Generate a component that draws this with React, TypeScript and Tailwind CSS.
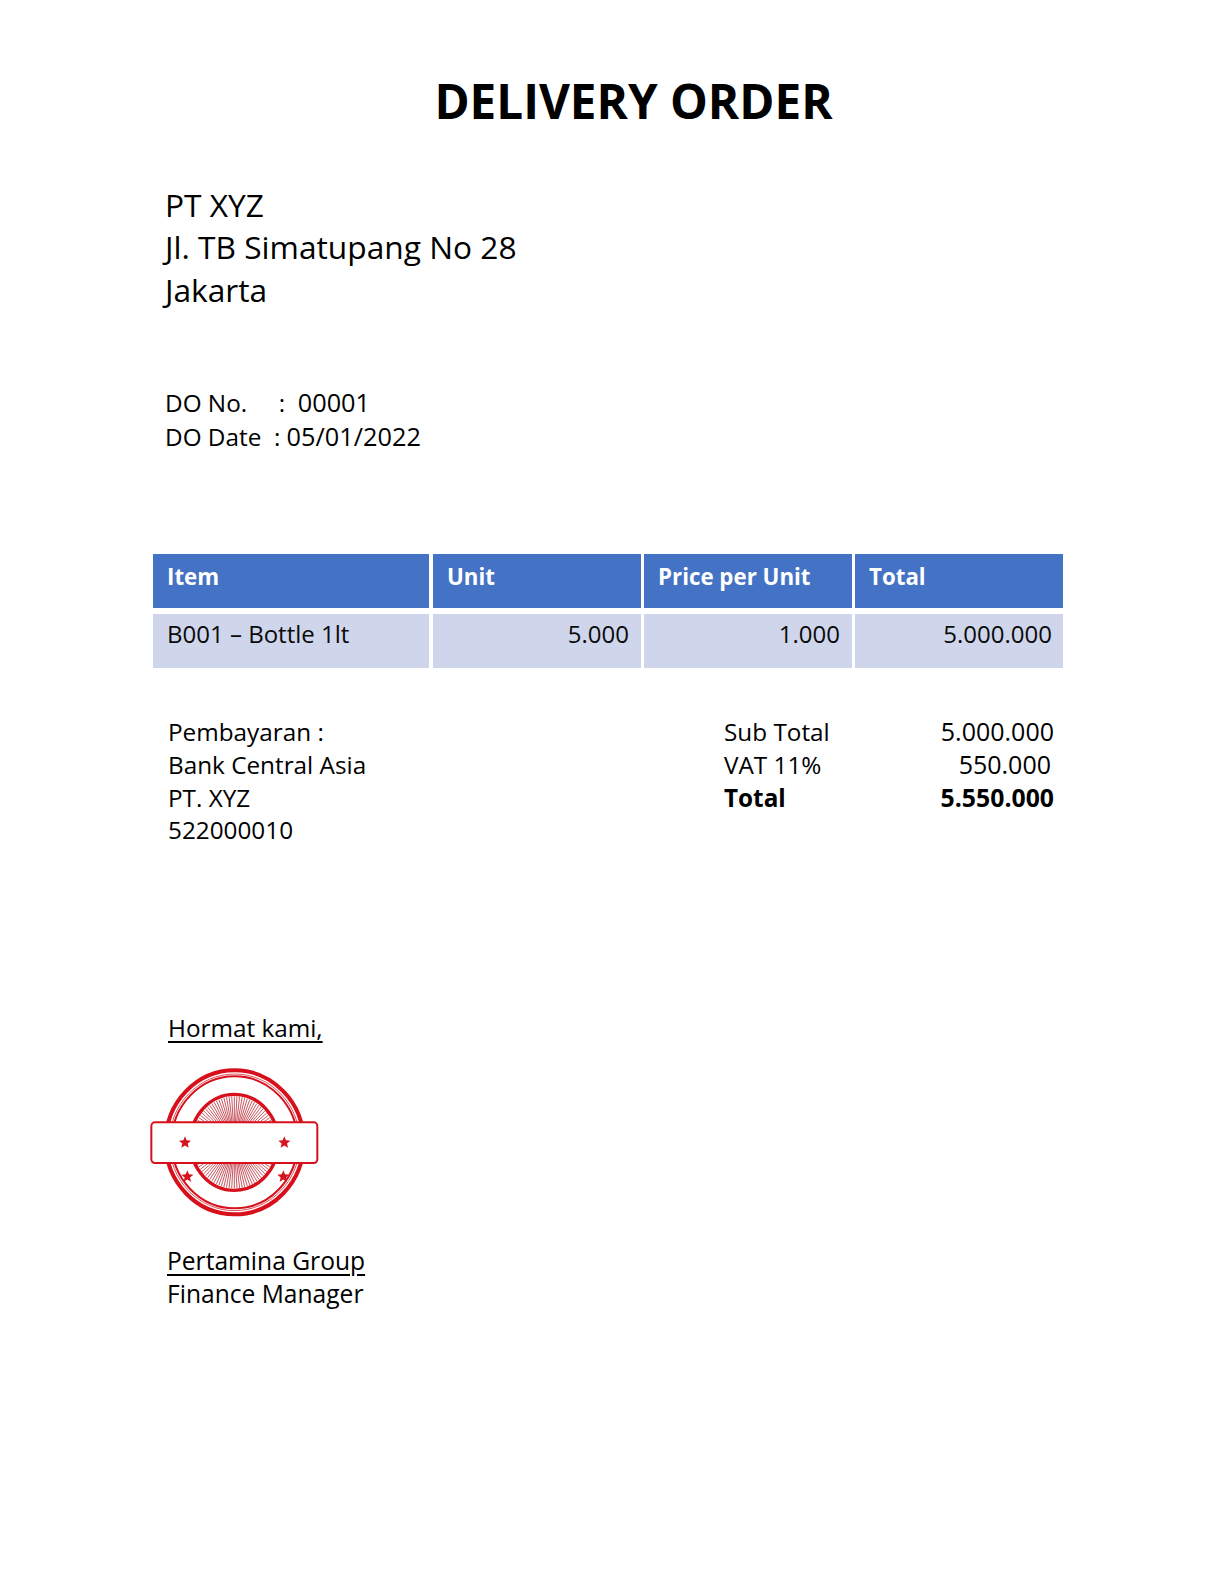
const font = { fontFamily: '"Open Sans", "Liberation Sans", sans-serif' };

function Star({ x, y }: { x: number; y: number }) {
  const pts: string[] = [];
  for (let i = 0; i < 10; i++) {
    const r = i % 2 === 0 ? 19 : 8.5;
    const a = -Math.PI / 2 + (i * Math.PI) / 5;
    pts.push(`${x + r * Math.cos(a)},${y + r * Math.sin(a)}`);
  }
  return <polygon points={pts.join(" ")} fill="#d4141f" />;
}

function Stamp() {
  const rays = [];
  for (let i = 0; i < 100; i++) {
    const a = (i * Math.PI) / 50;
    rays.push(
      <line
        key={i}
        x1={313 + 22 * Math.cos(a)}
        y1={277 + 24 * Math.sin(a)}
        x2={313 + 126 * Math.cos(a)}
        y2={277 + 138 * Math.sin(a)}
        stroke="#c24a55"
        strokeWidth="2.8"
      />
    );
  }
  return (
    <svg width="210" height="180" viewBox="0 0 630 540" className="block blur-[0.4px]">
      <ellipse cx="314" cy="277" rx="207" ry="216" fill="none" stroke="#d8101c" strokeWidth="12" />
      <ellipse cx="314" cy="277" rx="196" ry="205" fill="none" stroke="#e0505a" strokeWidth="3" />
      <ellipse cx="314" cy="277" rx="189" ry="198" fill="none" stroke="#d8101c" strokeWidth="6" />
      {rays}
      <ellipse cx="313" cy="277" rx="132" ry="144" fill="none" stroke="#d8101c" strokeWidth="10" />
      <rect x="64" y="217" width="498" height="122" rx="11" fill="#fff" stroke="#d8101c" strokeWidth="6" />
      <Star x={165} y={278} />
      <Star x={463} y={278} />
      <Star x={172} y={380} />
      <Star x={460} y={380} />
    </svg>
  );
}

const headCell = "bg-[#4472c4] text-white font-bold text-[22.3px] leading-[32px] pl-[14px] pt-[7px]";
const bodyCell = "bg-[#cfd5ea] text-[#0a0a0a] text-[24px] leading-[32px] pt-[4px] pr-[12px] text-right";

export default function App() {
  return (
    <div style={font} className="w-[1224px] h-[1584px] bg-white text-black overflow-hidden">
      <h1 className="pt-[70px] pl-[43px] text-center text-[47.6px] leading-[62px] font-bold">DELIVERY ORDER</h1>

      <div className="mt-[52px] ml-[165px] text-[31.7px] leading-[42.4px]">
        <div>PT XYZ</div>
        <div>Jl. TB Simatupang No 28</div>
        <div>Jakarta</div>
      </div>

      <div className="mt-[75px] ml-[165px] text-[24.3px] leading-[33.5px]">
        <div className="whitespace-pre">DO No.     :  <span className="text-[25.3px]">00001</span></div>
        <div className="whitespace-pre">DO Date  : <span className="text-[25.3px]">05/01/2022</span></div>
      </div>

      <div className="mt-[101px] ml-[153px] w-[910px] grid grid-cols-[276px_209px_208px_208px] grid-rows-[54px_54px] gap-x-[3px] gap-y-[6px]">
        <div className={headCell}>Item</div>
        <div className={headCell + " ml-px"}>Unit</div>
        <div className={headCell}>Price per Unit</div>
        <div className={headCell}>Total</div>
        <div className={bodyCell + " !text-left pl-[14px]"}>B001 – Bottle 1lt</div>
        <div className={bodyCell + " ml-px"}>5.000</div>
        <div className={bodyCell}>1.000</div>
        <div className={bodyCell + " !pr-[11px]"}>5.000.000</div>
      </div>

      <div className="mt-[48px] ml-[168px] flex text-[24.3px] leading-[32.7px]">
        <div className="w-[556px]">
          <div>Pembayaran :</div>
          <div>Bank Central Asia</div>
          <div>PT. XYZ</div>
          <div>522000010</div>
        </div>
        <div className="w-[330px] -mt-px">
          <div className="flex justify-between items-baseline h-[32.7px]"><span>Sub Total</span><span className="text-[25px]">5.000.000</span></div>
          <div className="flex justify-between items-baseline h-[32.7px]"><span>VAT 11%</span><span className="pr-[3px] text-[25px]">550.000</span></div>
          <div className="flex justify-between items-baseline h-[32.7px] font-bold"><span>Total</span><span className="text-[24.8px]">5.550.000</span></div>
        </div>
      </div>

      <div className="mt-[164px] ml-[168px] text-[24.3px] leading-[33px] underline underline-offset-[4px]">Hormat kami,</div>

      <div className="mt-[6px] ml-[130px]">
        <Stamp />
      </div>

      <div className="mt-[14px] ml-[167px] text-[24.6px] leading-[33px]">
        <div className="underline underline-offset-[4px]">Pertamina Group</div>
        <div>Finance Manager</div>
      </div>
    </div>
  );
}
